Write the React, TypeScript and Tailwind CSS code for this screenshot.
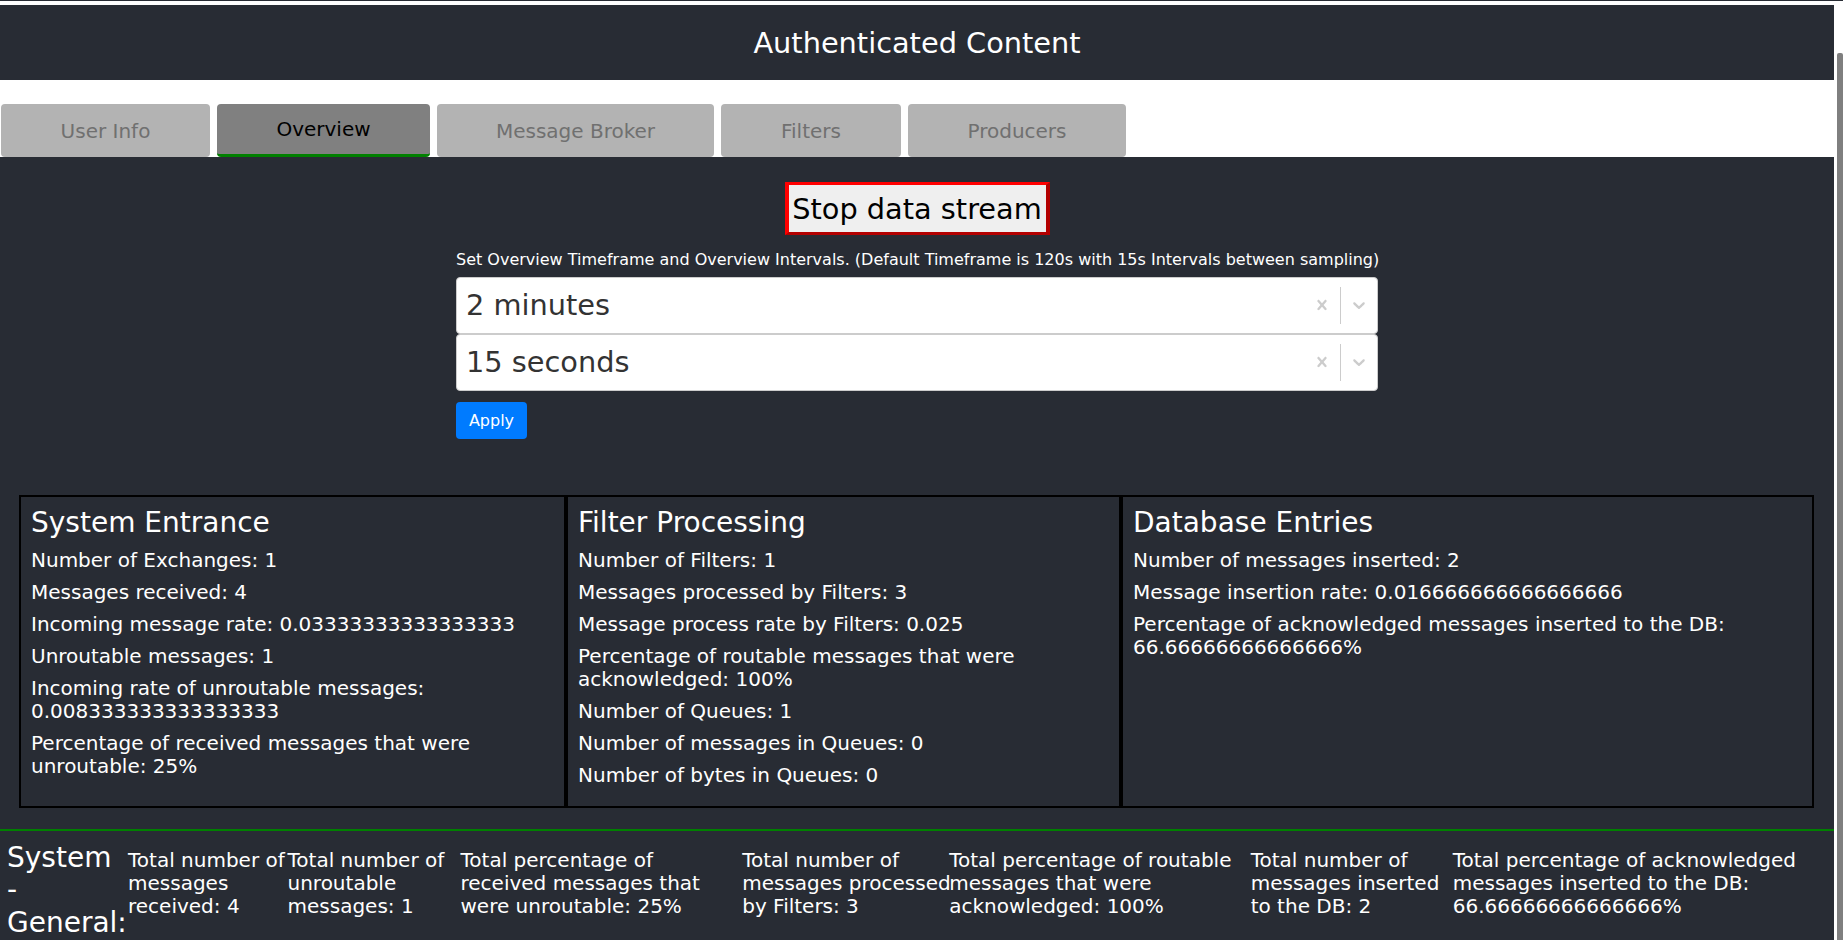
import React from "react";

const tabs = [
  { label: "User Info", width: "w-[209px]", active: false },
  { label: "Overview", width: "w-[213px]", active: true },
  { label: "Message Broker", width: "w-[277px]", active: false },
  { label: "Filters", width: "w-[180px]", active: false },
  { label: "Producers", width: "w-[218px]", active: false },
];

const cards = [
  {
    title: "System Entrance",
    width: "w-[547px]",
    lines: [
      "Number of Exchanges: 1",
      "Messages received: 4",
      "Incoming message rate: 0.03333333333333333",
      "Unroutable messages: 1",
      "Incoming rate of unroutable messages: 0.008333333333333333",
      "Percentage of received messages that were unroutable: 25%",
    ],
  },
  {
    title: "Filter Processing",
    width: "w-[555px]",
    lines: [
      "Number of Filters: 1",
      "Messages processed by Filters: 3",
      "Message process rate by Filters: 0.025",
      "Percentage of routable messages that were acknowledged: 100%",
      "Number of Queues: 1",
      "Number of messages in Queues: 0",
      "Number of bytes in Queues: 0",
    ],
  },
  {
    title: "Database Entries",
    width: "w-[693px]",
    lines: [
      "Number of messages inserted: 2",
      "Message insertion rate: 0.016666666666666666",
      "Percentage of acknowledged messages inserted to the DB: 66.66666666666666%",
    ],
  },
];

const totals = [
  { width: "w-[159.5px]", lines: ["Total number of", "messages", "received: 4"] },
  { width: "w-[173px]", lines: ["Total number of", "unroutable", "messages: 1"] },
  { width: "w-[281.7px]", lines: ["Total percentage of", "received messages that", "were unroutable: 25%"] },
  { width: "w-[207px]", lines: ["Total number of", "messages processed", "by Filters: 3"] },
  { width: "w-[301.5px]", lines: ["Total percentage of routable", "messages that were", "acknowledged: 100%"] },
  { width: "w-[202px]", lines: ["Total number of", "messages inserted", "to the DB: 2"] },
  { width: "flex-1", lines: ["Total percentage of acknowledged", "messages inserted to the DB:", "66.66666666666666%"] },
];

function CrossIcon() {
  return (
    <svg viewBox="0 0 20 20" className="w-5 h-5" fill="currentColor">
      <path d="M14.348 14.849c-0.469 0.469-1.229 0.469-1.697 0l-2.651-3.030-2.651 3.029c-0.469 0.469-1.229 0.469-1.697 0-0.469-0.469-0.469-1.229 0-1.697l2.758-3.15-2.759-3.152c-0.469-0.469-0.469-1.228 0-1.697s1.228-0.469 1.697 0l2.652 3.031 2.651-3.031c0.469-0.469 1.228-0.469 1.697 0s0.469 1.229 0 1.697l-2.758 3.152 2.758 3.15c0.469 0.469 0.469 1.229 0 1.698z" />
    </svg>
  );
}

function ChevronIcon() {
  return (
    <svg viewBox="0 0 20 20" className="w-5 h-5" fill="currentColor">
      <path d="M4.516 7.548c0.436-0.446 1.043-0.481 1.576 0l3.908 3.747 3.908-3.747c0.533-0.481 1.141-0.446 1.574 0 0.436 0.445 0.408 1.197 0 1.615-0.406 0.418-4.695 4.502-4.695 4.502-0.217 0.223-0.502 0.335-0.787 0.335s-0.57-0.112-0.789-0.335c0 0-4.287-4.084-4.695-4.502s-0.436-1.17 0-1.615z" />
    </svg>
  );
}

function SelectBox({ value }: { value: string }) {
  return (
    <div className="h-[57px] flex items-stretch bg-white border border-[#cccccc] rounded-[4px]">
      <div className="flex-1 flex items-center pl-[9px] text-[28.8px] text-[#333333]">{value}</div>
      <div className="w-[36px] flex items-center justify-center text-[#cccccc]">
        <CrossIcon />
      </div>
      <div className="w-px my-[9px] bg-[#cccccc]" />
      <div className="w-[36px] flex items-center justify-center text-[#cccccc]">
        <ChevronIcon />
      </div>
    </div>
  );
}

export default function App() {
  return (
    <div className="h-[940px] overflow-hidden flex flex-col bg-white leading-[normal] font-['DejaVu_Sans',sans-serif]">
      <div className="h-px shrink-0 bg-[#282c34]" />
      <div className="flex flex-1 min-h-0">
        <div className="flex-1 min-w-0 flex flex-col">
          <div className="h-[4px] shrink-0 bg-white" />
          <header className="h-[75px] shrink-0 bg-[#282c34] flex items-center justify-center text-white text-[28.8px]">
            Authenticated Content
          </header>

          <nav className="shrink-0 bg-white pt-[24px] pl-px flex gap-[7px]">
            {tabs.map((t) => (
              <div
                key={t.label}
                className={
                  t.active
                    ? `${t.width} h-[53px] flex items-center justify-center rounded-[4px] bg-[#808080] border-b-[3px] border-[#008000] text-black text-[20px]`
                    : `${t.width} h-[53px] flex items-center justify-center rounded-[4px] bg-[#b3b3b3] text-[#707070] text-[20px]`
                }
              >
                {t.label}
              </div>
            ))}
          </nav>

          <main className="flex-1 bg-[#282c34] text-white flex flex-col">
            <div className="flex justify-center pt-[25px]">
              <button className="w-[265px] h-[53px] flex items-center justify-center bg-[#efefef] text-black text-[28.8px] border-x-4 border-y-[3px] border-t-[#ff0000] border-l-[#ff0000] border-b-[#b30000] border-r-[#b30000]">
                Stop data stream
              </button>
            </div>

            <div className="w-[922px] mx-auto mt-[15.7px] flex flex-col">
              <p className="text-[16px] leading-[18.6px] whitespace-nowrap">
                Set Overview Timeframe and Overview Intervals. (Default Timeframe is 120s with 15s Intervals between sampling)
              </p>
              <div className="mt-[7.7px]">
                <SelectBox value="2 minutes" />
                <SelectBox value="15 seconds" />
              </div>
              <div className="mt-[11px]">
                <button className="w-[71px] h-[37px] flex items-center justify-center bg-[#007bff] text-white text-[16px] rounded-[4px]">
                  Apply
                </button>
              </div>
            </div>

            <div className="mx-[19px] mt-[56px] flex">
              {cards.map((c) => (
                <section key={c.title} className={`${c.width} shrink-0 border-2 border-black p-[10px]`}>
                  <h3 className="text-[28px] leading-[32.6px] mb-[9px]">{c.title}</h3>
                  {c.lines.map((l) => (
                    <p key={l} className="text-[20px] leading-[23.3px] mb-[8.7px]">
                      {l}
                    </p>
                  ))}
                </section>
              ))}
            </div>

            <div className="mt-[21px] border-t-2 border-[#008000] pt-[11px] pl-[7px] flex items-baseline">
              <div className="w-[121px] shrink-0 text-[28px] leading-[32.6px]">System - General:</div>
              {totals.map((t, i) => (
                <div key={i} className={`${t.width} shrink-0 text-[20px] leading-[23.3px] whitespace-nowrap`}>
                  {t.lines.map((l) => (
                    <div key={l}>{l}</div>
                  ))}
                </div>
              ))}
            </div>
          </main>
        </div>

        <div className="w-[9px] shrink-0 bg-white pl-[3px] flex flex-col">
          <div className="mt-[52px] flex-1 bg-[#7f7f7f] rounded-t-[2px]" />
        </div>
      </div>
    </div>
  );
}
